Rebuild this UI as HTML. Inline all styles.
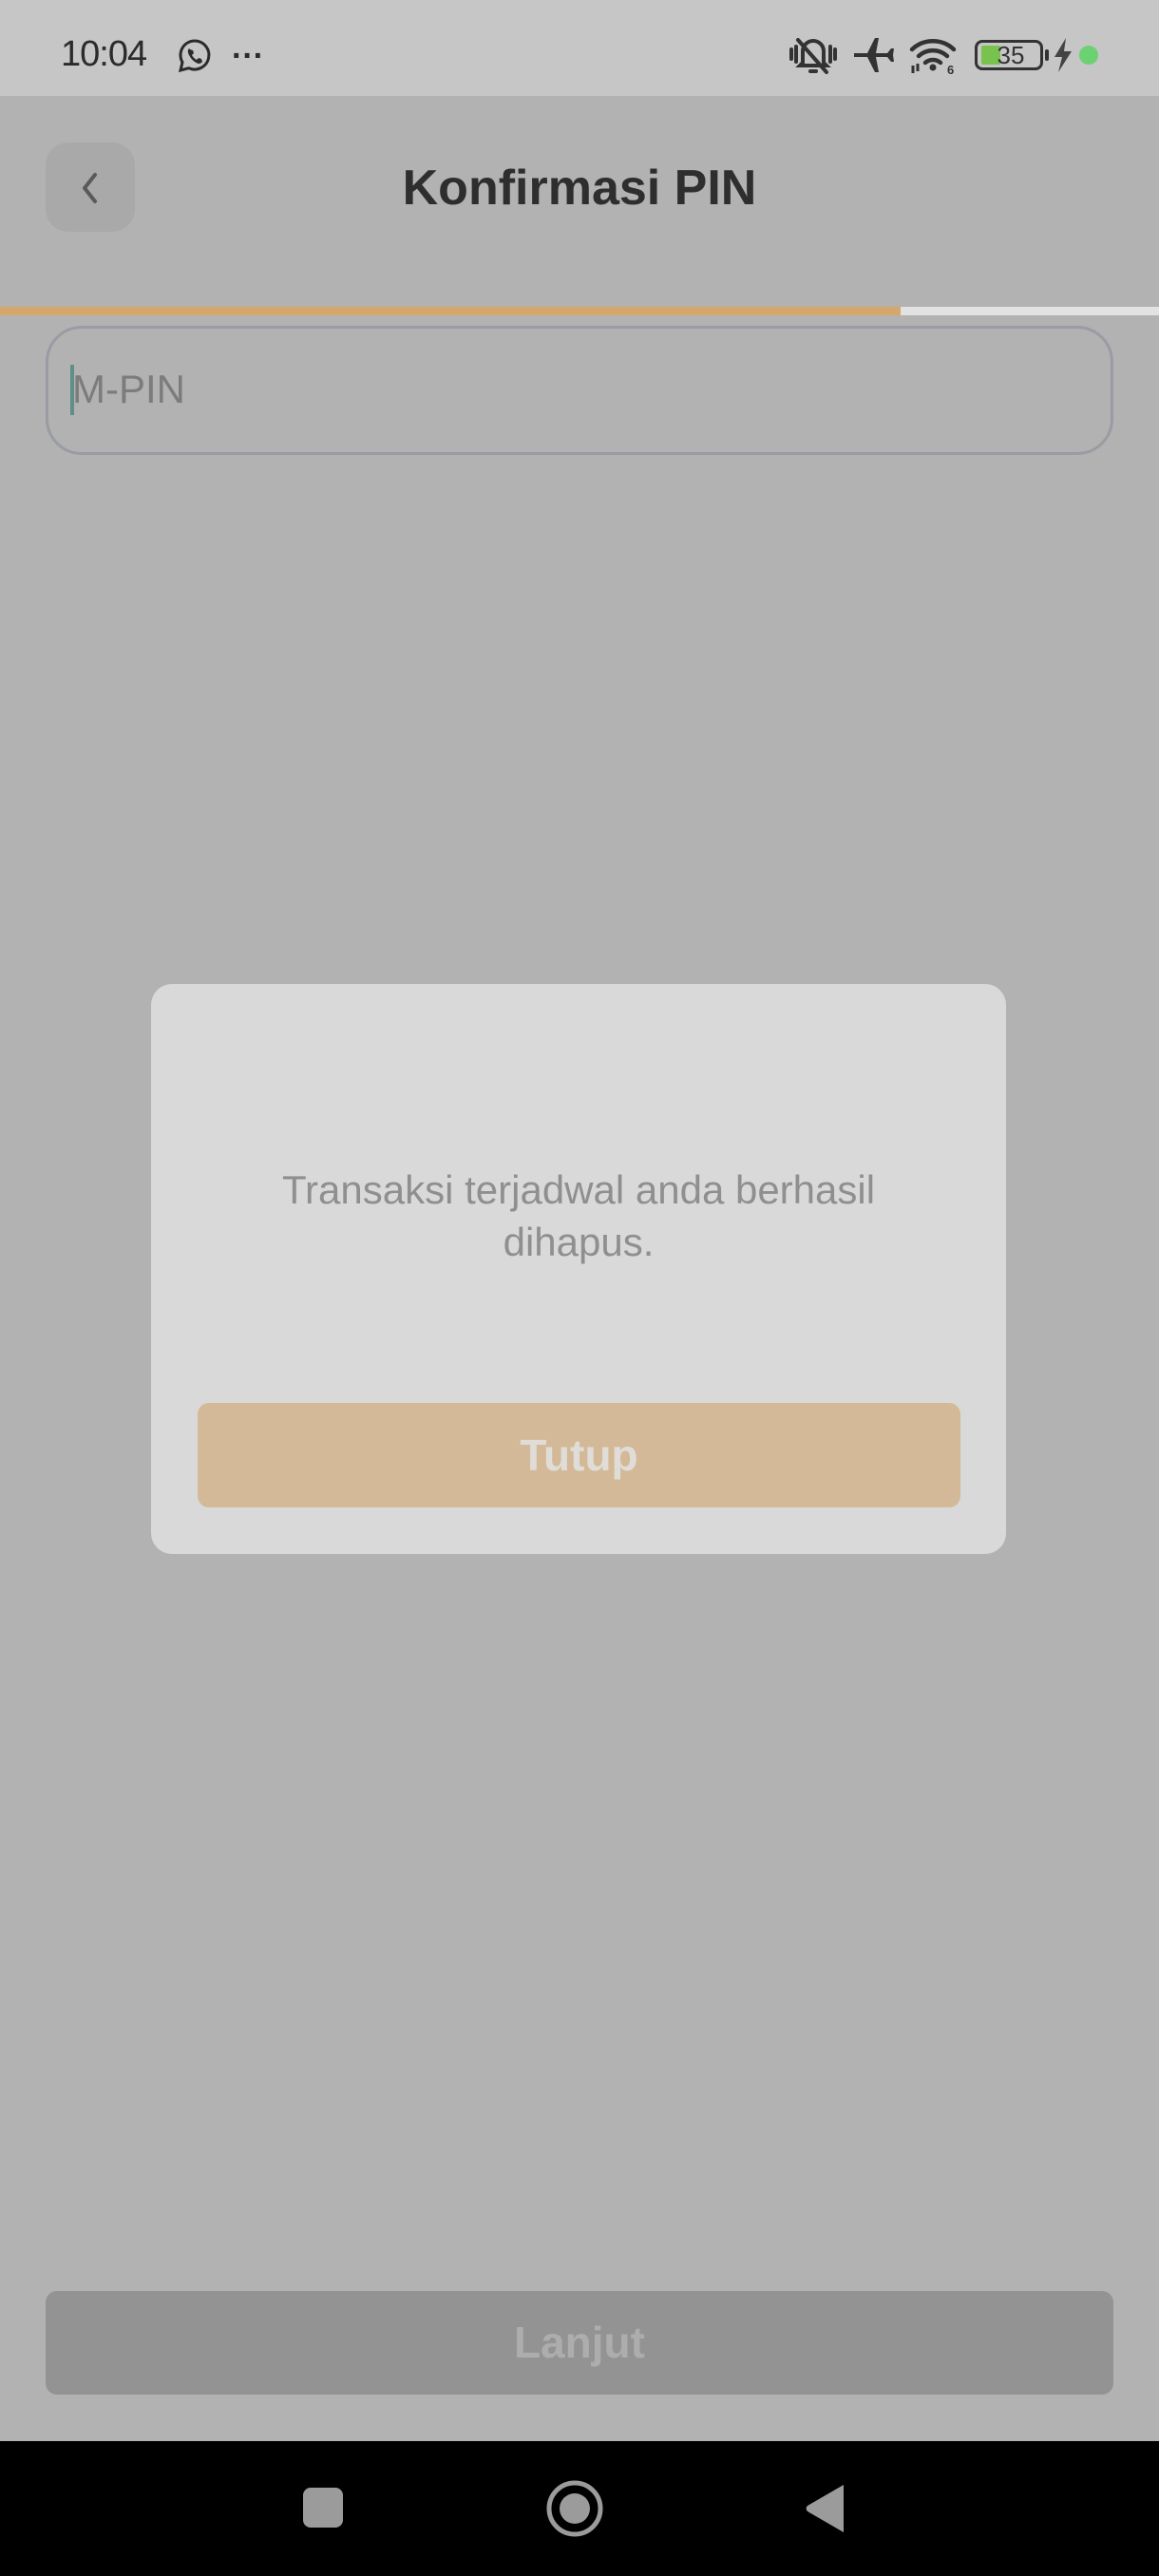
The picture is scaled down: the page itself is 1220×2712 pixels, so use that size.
<!DOCTYPE html>
<html><head><meta charset="utf-8"><style>
*{margin:0;padding:0;box-sizing:border-box}
body{width:1220px;height:2712px;background:#b2b2b2;position:relative;overflow:hidden;font-family:"Liberation Sans",sans-serif}
.abs{position:absolute}
</style></head><body>
<div class="abs" style="left:0;top:0;width:1220px;height:101px;background:#c6c6c6"></div>
<div class="abs" style="left:64px;top:36px;font-size:38px;color:#2b2b2b;letter-spacing:-1px">10:04</div>
<svg class="abs" style="left:186px;top:40px" width="38" height="38" viewBox="0 0 38 38"><path d="M19 3a15 15 0 0 0-13 22.5L4 34l8.8-2.3A15 15 0 1 0 19 3z" fill="none" stroke="#2b2b2b" stroke-width="3"/><path d="M13 11c-1 1-2 3 0 7s6 8 10 9c2 0 3-1 4-2l-1-3-3-1-2 2c-2-1-4-3-5-5l2-2-1-3-3-1z" fill="#2b2b2b"/></svg>
<div class="abs" style="left:244px;top:40px;font-size:34px;color:#2b2b2b;font-weight:bold">···</div>
<svg class="abs" style="left:830px;top:36px" width="52" height="44" viewBox="0 0 52 44"><g stroke="#333" stroke-width="4" fill="none" stroke-linecap="round"><path d="M15 30V18a11 11 0 0 1 22 0v12l3 3H12z"/><path d="M10 6l30 34"/><path d="M3 16v10M8 13v16M44 13v16M49 16v10"/></g><rect x="21" y="37" width="10" height="4" rx="2" fill="#333"/></svg>
<svg class="abs" style="left:897px;top:38px" width="46" height="40" viewBox="0 0 46 40"><path d="M2 18h14L24 2h4l-3 16h12l4-5h3l-1 7 1 7h-3l-4-5H25l3 16h-4L16 22H2z" fill="#333"/></svg>
<svg class="abs" style="left:957px;top:38px" width="52" height="40" viewBox="0 0 52 40"><g fill="none" stroke="#333" stroke-width="4.5" stroke-linecap="round"><path d="M3 14a32 32 0 0 1 44 0"/><path d="M10 21a22 22 0 0 1 30 0"/><path d="M17 28a12 12 0 0 1 16 0"/></g><circle cx="25" cy="33" r="3.5" fill="#333"/><path d="M4 31v8M9 29v8" stroke="#333" stroke-width="3"/><text x="40" y="40" font-size="13" font-weight="bold" fill="#333" font-family="Liberation Sans">6</text></svg>
<div class="abs" style="left:1026px;top:42px;width:72px;height:32px;border:3.5px solid #333;border-radius:8px"></div>
<div class="abs" style="left:1033px;top:48px;width:20px;height:20px;background:#7ac24e;border-radius:2px"></div>
<div class="abs" style="left:1038px;top:43px;font-size:26px;color:#333;width:52px;text-align:center">35</div>
<div class="abs" style="left:1100px;top:52px;width:4px;height:12px;background:#333;border-radius:2px"></div>
<svg class="abs" style="left:1108px;top:40px" width="22" height="36" viewBox="0 0 22 36"><path d="M14 0L2 20h8L6 36 20 14h-8z" fill="#444"/></svg>
<div class="abs" style="left:1136px;top:48px;width:20px;height:20px;background:#6bd173;border-radius:50%"></div>

<div class="abs" style="left:48px;top:150px;width:94px;height:94px;background:#a9a9aa;border-radius:24px"></div>
<svg class="abs" style="left:82px;top:180px" width="26" height="36" viewBox="0 0 26 36"><path d="M18 4L7 18l11 14" fill="none" stroke="#5a5a5a" stroke-width="4" stroke-linecap="round" stroke-linejoin="round"/></svg>
<div class="abs" style="left:0;width:1220px;top:168px;text-align:center;font-size:52px;font-weight:bold;color:#2e2e2e">Konfirmasi PIN</div>

<div class="abs" style="left:0;top:323px;width:948px;height:9px;background:#d4a76c"></div>
<div class="abs" style="left:948px;top:323px;width:272px;height:9px;background:#e2e2e2"></div>

<div class="abs" style="left:48px;top:343px;width:1124px;height:136px;border:3px solid #9a9ca3;border-radius:38px"></div>
<div class="abs" style="left:74px;top:384px;width:4px;height:53px;background:#5f8f88"></div>
<div class="abs" style="left:76px;top:386px;font-size:42px;color:#7c7c7c">M-PIN</div>

<div class="abs" style="left:159px;top:1036px;width:900px;height:600px;background:#d9d9d9;border-radius:22px"></div>
<div class="abs" style="left:159px;width:900px;top:1225px;text-align:center;font-size:42px;line-height:55px;color:#8f8f8f">Transaksi terjadwal anda berhasil<br>dihapus.</div>
<div class="abs" style="left:208px;top:1477px;width:803px;height:110px;background:#d3b997;border-radius:12px;text-align:center;line-height:110px;font-size:46px;font-weight:bold;color:#e0ddd8">Tutup</div>

<div class="abs" style="left:48px;top:2412px;width:1124px;height:109px;background:#939393;border-radius:12px;text-align:center;line-height:109px;font-size:46px;font-weight:bold;color:#adadad">Lanjut</div>

<div class="abs" style="left:0;top:2570px;width:1220px;height:142px;background:#000"></div>
<div class="abs" style="left:319px;top:2619px;width:42px;height:42px;background:#9b9b9b;border-radius:8px"></div>
<svg class="abs" style="left:574px;top:2610px" width="62" height="62" viewBox="0 0 62 62"><circle cx="31" cy="31" r="27" fill="none" stroke="#9b9b9b" stroke-width="5"/><circle cx="31" cy="31" r="16" fill="#9b9b9b"/></svg>
<svg class="abs" style="left:846px;top:2614px" width="46" height="54" viewBox="0 0 46 54"><path d="M42 2v50L4 30a4 4 0 0 1 0-6z" fill="#9b9b9b"/></svg>
</body></html>
